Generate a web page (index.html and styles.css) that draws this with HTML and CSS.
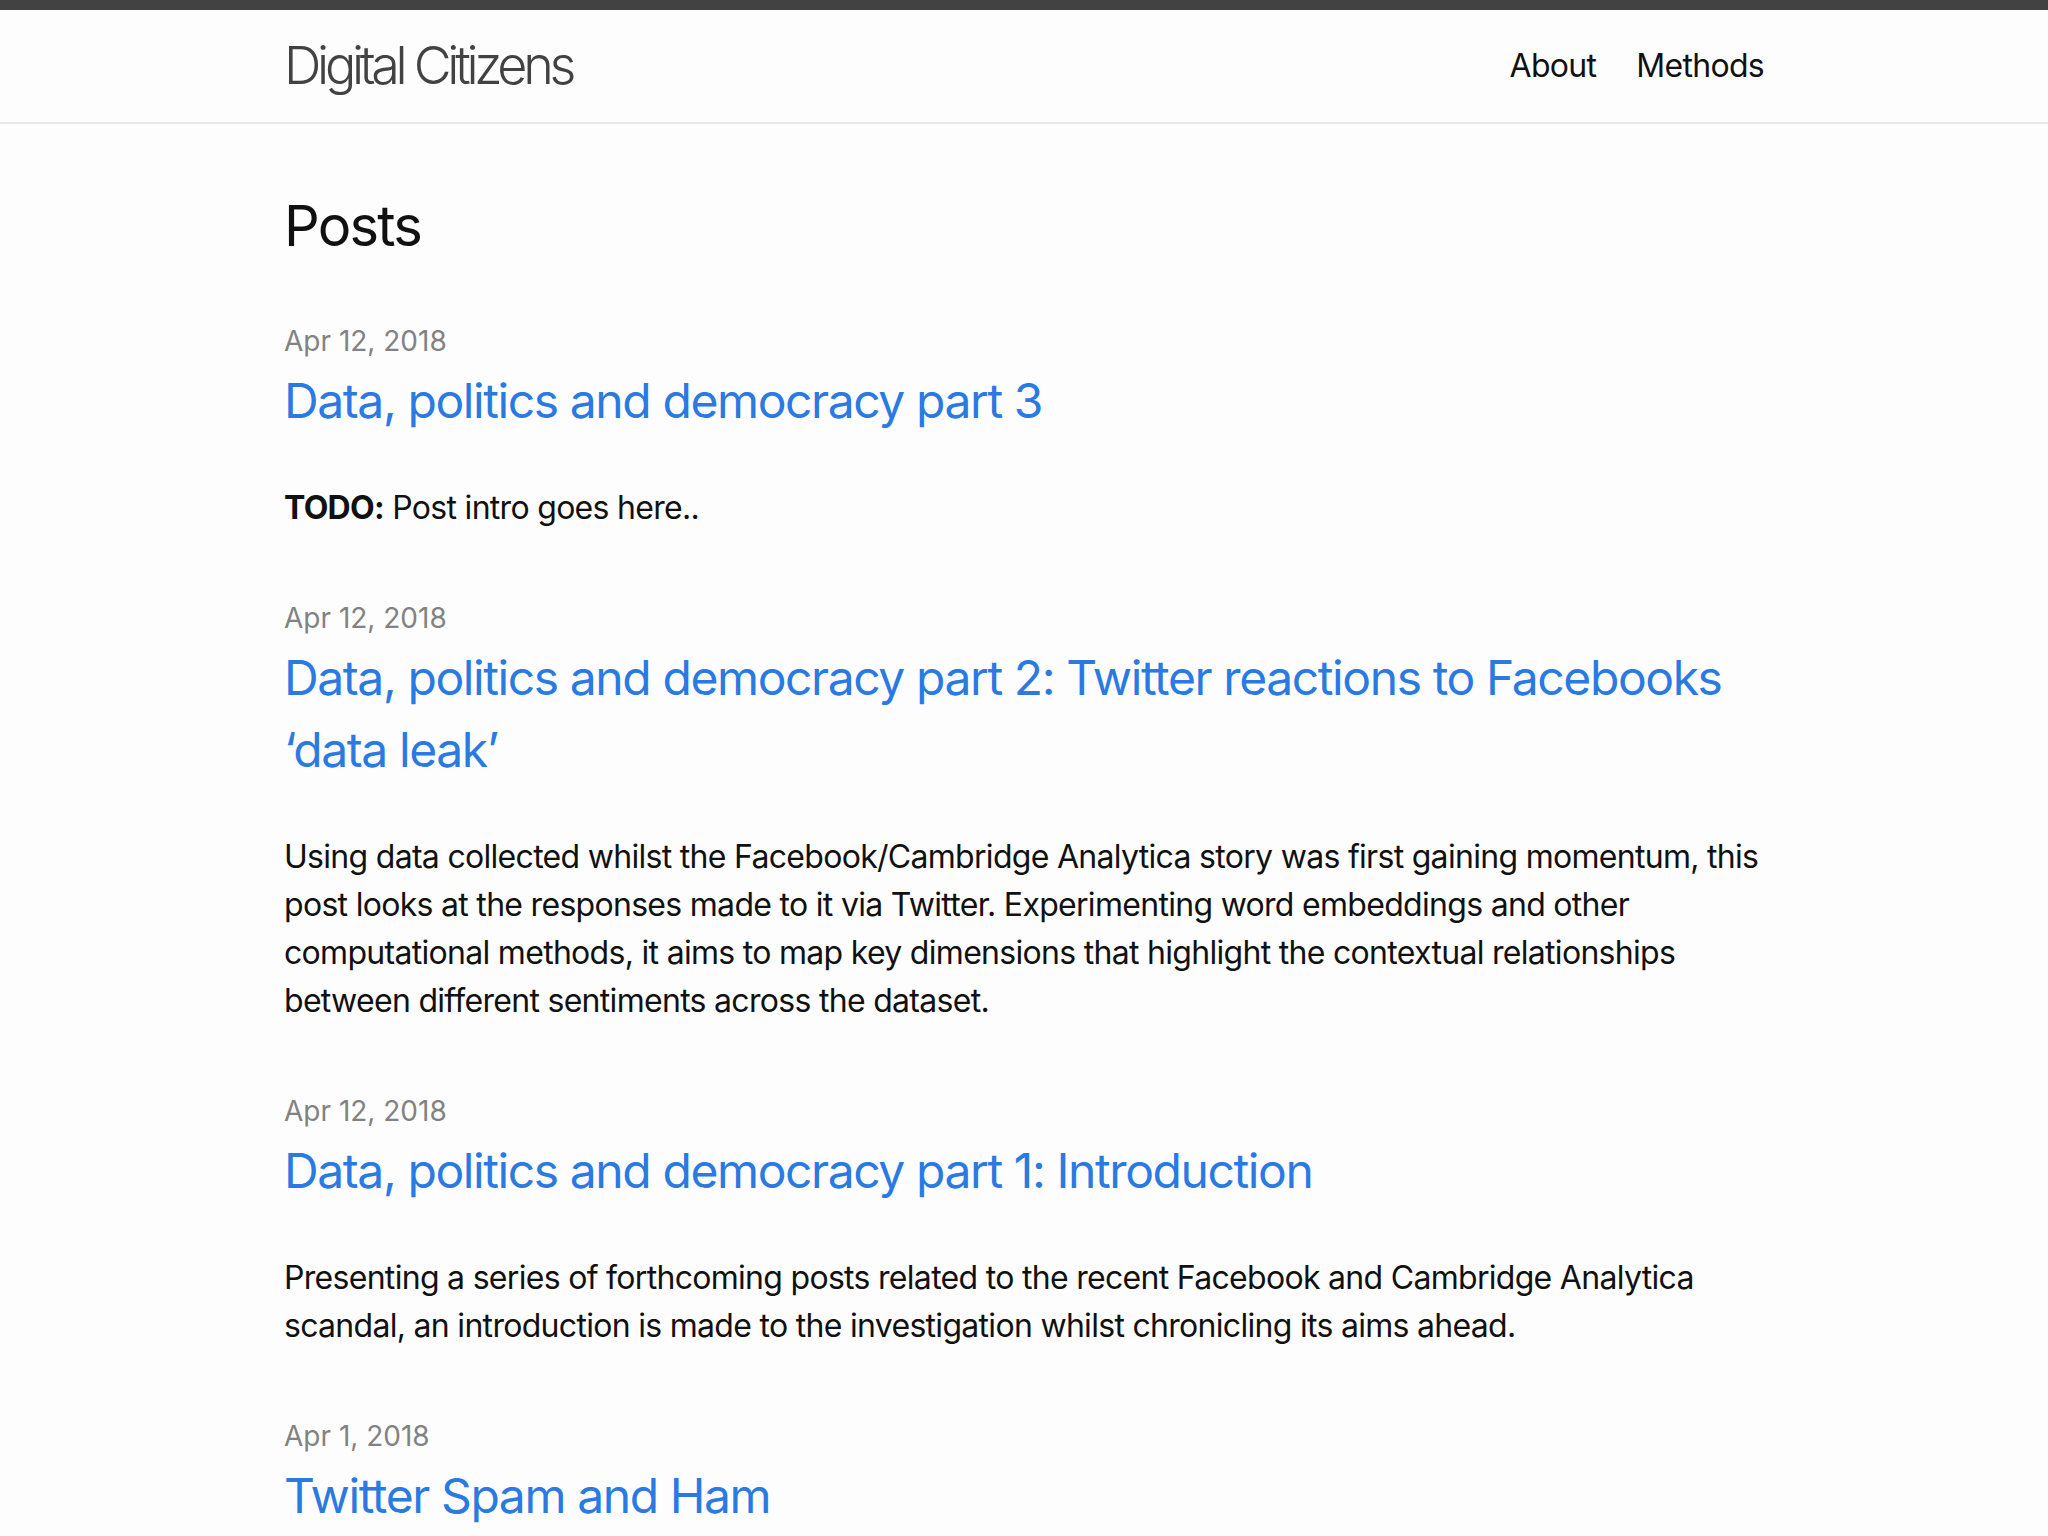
FILE: index.html
```html
<!DOCTYPE html>
<html lang="en">
<head>
<meta charset="utf-8">
<title>Digital Citizens</title>
<link rel="stylesheet" href="styles.css">
</head>
<body>
<header class="site-header">
  <div class="wrapper header-row">
    <a class="site-title" href="#">Digital Citizens</a>
    <nav class="site-nav">
      <a class="page-link" href="#">About</a>
      <a class="page-link" href="#">Methods</a>
    </nav>
  </div>
</header>
<main class="page-content">
  <div class="wrapper">
    <h2 class="post-list-heading">Posts</h2>
    <ul class="post-list">
      <li>
        <span class="post-meta">Apr 12, 2018</span>
        <h3><a class="post-link" href="#">Data, politics and democracy part 3</a></h3>
        <p><strong>TODO:</strong> Post intro goes here..</p>
      </li>
      <li>
        <span class="post-meta">Apr 12, 2018</span>
        <h3><a class="post-link" href="#">Data, politics and democracy part 2: Twitter reactions to Facebooks ‘data leak’</a></h3>
        <p>Using data collected whilst the Facebook/Cambridge Analytica story was first gaining momentum, this post looks at the responses made to it via Twitter. Experimenting word embeddings and other computational methods, it aims to map key dimensions that highlight the contextual relationships between different sentiments across the dataset.</p>
      </li>
      <li>
        <span class="post-meta">Apr 12, 2018</span>
        <h3><a class="post-link" href="#">Data, politics and democracy part 1: Introduction</a></h3>
        <p>Presenting a series of forthcoming posts related to the recent Facebook and Cambridge Analytica scandal, an introduction is made to the investigation whilst chronicling its aims ahead.</p>
      </li>
      <li>
        <span class="post-meta">Apr 1, 2018</span>
        <h3><a class="post-link" href="#">Twitter Spam and Ham</a></h3>
      </li>
    </ul>
  </div>
</main>
</body>
</html>
```
FILE: styles.css
```css
html, body {
  margin: 0;
  padding: 0;
}
body {
  font-family: Inter, "Liberation Sans", Arial, sans-serif;
  font-size: 32px;
  font-weight: 400;
  line-height: 1.5;
  letter-spacing: -0.7px;
  color: #111111;
  background: #fdfdfd;
  overflow: hidden;
}
a {
  text-decoration: none;
}
.wrapper {
  max-width: 1480px;
  margin: 0 auto;
  padding: 0 60px;
}
.site-header {
  border-top: 10px solid #424242;
  border-bottom: 2px solid #e8e8e8;
  height: 112px;
}
.header-row {
  display: flex;
  justify-content: space-between;
  align-items: center;
  height: 112px;
}
.site-title {
  font-size: 52px;
  font-weight: 300;
  letter-spacing: -4.3px;
  line-height: 108px;
  color: #424242;
}
.site-nav {
  display: flex;
  gap: 40px;
  line-height: 108px;
}
.page-link {
  color: #111111;
}
.page-content {
  padding-top: 60px;
}
.post-list-heading {
  font-size: 56px;
  font-weight: 400;
  line-height: 84px;
  letter-spacing: -1.8px;
  margin: 0 0 49px;
}
.post-list {
  list-style: none;
  margin: 0;
  padding: 0;
}
.post-list li {
  margin-bottom: 62px;
}
.post-meta {
  display: block;
  font-size: 28px;
  line-height: 48px;
  letter-spacing: 0;
  color: #828282;
}
.post-list h3 {
  margin: 0;
  font-weight: 400;
}
.post-link {
  display: block;
  font-size: 48px;
  line-height: 72px;
  letter-spacing: -1.4px;
  color: #2a7ae2;
}
.post-list p {
  margin: 47px 0 0;
  line-height: 48px;
}
.post-list strong {
  font-weight: 700;
}
```
